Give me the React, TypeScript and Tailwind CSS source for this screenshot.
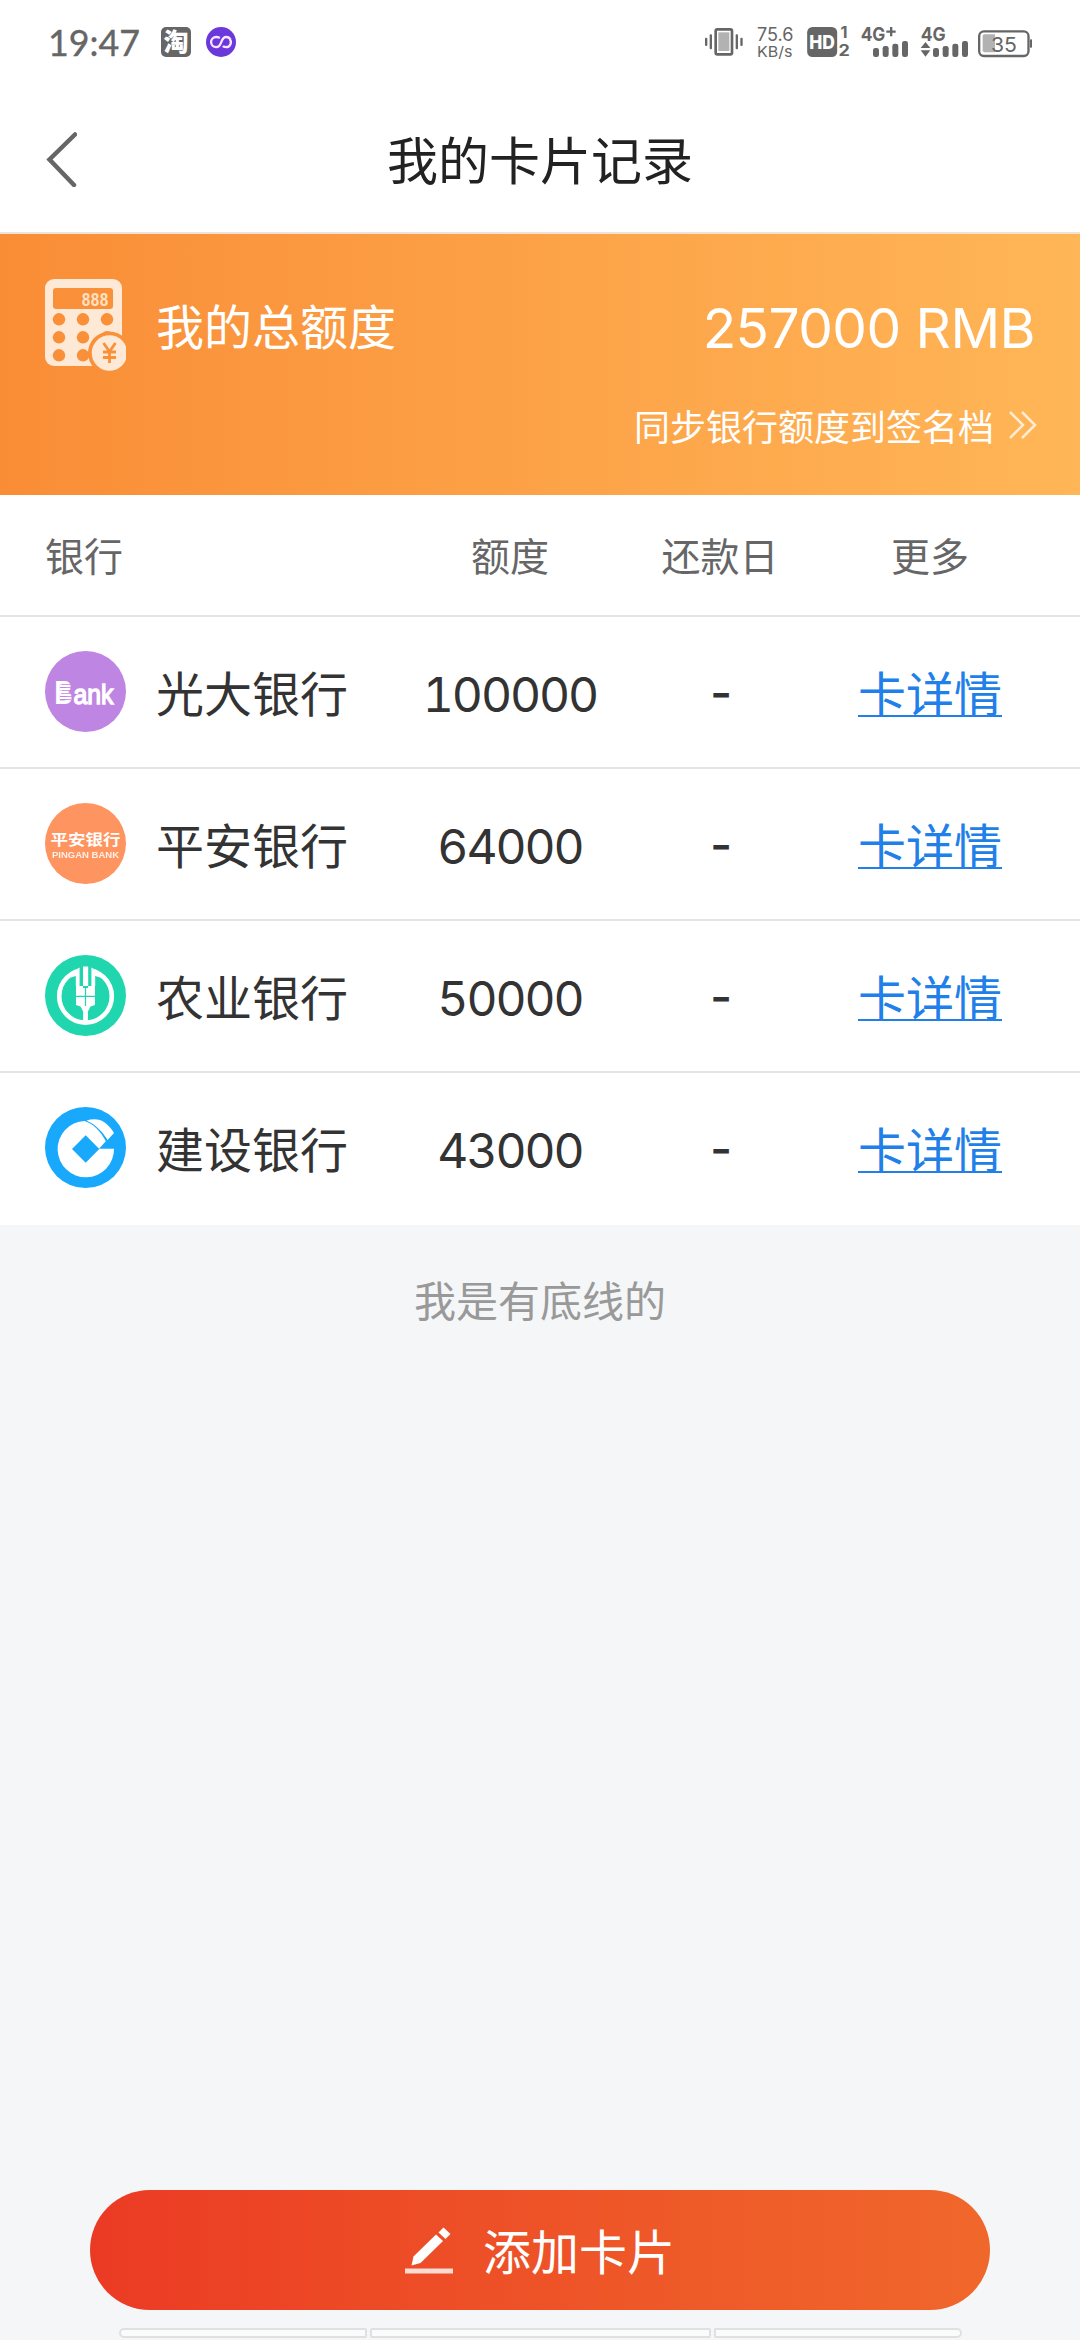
import type { ReactNode } from 'react'

const numFont = 'font-[Inter,"Noto_Sans_CJK_SC",sans-serif]'

interface Card {
  name: string
  amount: string
  logo: ReactNode
}

function EverbrightLogo() {
  return (
    <svg viewBox="0 0 81 81" className="size-[81px] shrink-0">
      <circle cx="40.5" cy="40.5" r="40.5" fill="#be86e2" />
      <g fill="#fff" fontFamily="Liberation Sans">
        <text x="9.5" y="52.5" fontSize="33" fontWeight="700" textLength="18" lengthAdjust="spacingAndGlyphs">B</text>
        <text x="28.5" y="52.5" fontSize="28" textLength="40" lengthAdjust="spacingAndGlyphs" stroke="#fff" strokeWidth="1.4">ank</text>
      </g>
      <path d="M17 33.5h9M18 36.5h9M17 39.5h10M16 42.5h11M17 45.5h10M16 48.5h10" stroke="#be86e2" strokeWidth="0.8" />
      <path d="M15 35h9M15 38h8M15 44h10M15 47h9" stroke="#fff" strokeWidth="1.8" />
    </svg>
  )
}

function PinganLogo() {
  return (
    <svg viewBox="0 0 81 81" className="size-[81px] shrink-0">
      <circle cx="40.5" cy="40.5" r="40.5" fill="#fe945f" />
      <text x="5.5" y="42" fontSize="14.5" fontWeight="700" fill="#fff" fontFamily="Noto Sans CJK SC" textLength="70" lengthAdjust="spacingAndGlyphs">平安银行</text>
      <text x="7" y="54.8" fontSize="9" fontWeight="700" fill="#fff" opacity="0.85" fontFamily="Liberation Sans" textLength="67" lengthAdjust="spacingAndGlyphs">PINGAN BANK</text>
    </svg>
  )
}

function AgriculturalLogo() {
  return (
    <svg viewBox="0 0 81 81" className="size-[81px] shrink-0">
      <circle cx="40.5" cy="40.5" r="40.5" fill="#20d6ae" />
      <circle cx="40.5" cy="41.3" r="26.3" fill="none" stroke="#fff" strokeWidth="4.6" />
      <path d="M31 10h19v14H31z" fill="#20d6ae" />
      <path d="M34.6 12.6V31h-3.8V21l-5 1.4-2-4zM46.4 12.6V31h3.8V21l5 1.4 2-4z" fill="#fff" />
      <path d="M38 11.5h5.2V31H38z" fill="#fff" />
      <path d="M31 31h7v2h5v-2h7v19l-4.5 1.5-2.6 5V69h-4.8V56.5l-2.6-5L31 50z" fill="#fff" />
      <path d="M31 41.3h19M40.5 32v19" stroke="#20d6ae" strokeWidth="1.2" />
    </svg>
  )
}

function ConstructionLogo() {
  return (
    <svg viewBox="0 0 81 81" className="size-[81px] shrink-0">
      <circle cx="40.5" cy="40.5" r="40.5" fill="#18a8fc" />
      <path d="M69 41.7A28.2 28.2 0 1 1 39.5 13.9C48 16.5 55.5 23.5 60.8 34.3L54 41.7z" fill="#fff" />
      <path d="M41.5 13.4C46 12 51 11.8 55 13C61 15.5 66 20.5 69 26L62.6 33C57.5 24.5 50.5 17.5 41.5 13.4z" fill="#fff" />
      <path d="M40.7 28.3 54.3 42 40.7 55.7 27 42z" fill="#18a8fc" />
    </svg>
  )
}

function CalculatorIcon() {
  return (
    <svg viewBox="0 0 81 92" className="h-[92px] w-[81px]">
      <mask id="calc">
        <rect width="77" height="87" rx="9" fill="#fff" />
        <rect x="8" y="9" width="60" height="21" rx="3" fill="#000" />
        {[40.3, 58.3, 76.3].map((y) =>
          [14, 38, 62].map((x) => <circle key={`${x}-${y}`} cx={x} cy={y} r="6.2" fill="#000" />),
        )}
        <circle cx="64.5" cy="74" r="21.5" fill="#000" />
        <circle cx="64.5" cy="74" r="17.8" fill="#fff" />
        <path d="M58.5 64 64.5 72.5 70.5 64M64.5 72.5V84M58 73h13M58 78.5h13" stroke="#000" strokeWidth="2.8" fill="none" />
      </mask>
      <rect width="81" height="92" fill="#fee8d6" mask="url(#calc)" />
      <text x="36.5" y="26.5" fontSize="20" fontWeight="700" fill="#fee0c4" fontFamily="Liberation Mono" textLength="27" lengthAdjust="spacingAndGlyphs">888</text>
    </svg>
  )
}

/** 状态栏 */
function StatusBar() {
  return (
    <div className="flex h-[84px] items-start px-12 pt-[27px] text-[#666]">
      <svg viewBox="0 0 94 30" className="h-[30px] w-[94px] overflow-visible">
        <text x="0" y="28.5" fontSize="37" fill="#666" fontFamily="Lato" stroke="#666" strokeWidth="0.4" textLength="92" lengthAdjust="spacingAndGlyphs">19:47</text>
      </svg>
      <svg viewBox="0 0 30 30" className="ml-[19px] size-[30px] overflow-visible">
        <rect width="30" height="30" rx="5" fill="#666" />
        <text x="2.5" y="24" fontSize="25" fontWeight="900" fill="#fff" fontFamily="Noto Sans CJK SC">淘</text>
      </svg>
      <svg viewBox="0 0 30 30" className="ml-[15px] size-[30px]">
        <circle cx="15" cy="15" r="15" fill="#6b38dc" />
        <path d="M13 10.6Q12 10 10.2 10a5 5 0 0 0 0 10.2C16.5 20.2 14 10 20.2 10a4.8 4.8 0 0 1 4 2M17.5 19.6Q18.5 20.2 20.2 20.2a5 5 0 0 0 3.5-8.2" fill="none" stroke="#fbe4ff" strokeWidth="2.3" strokeLinecap="round" />
      </svg>
      <div className="flex-1" />

      {/* 振动 */}
      <svg viewBox="75 81 114 90" className="h-[30px] w-[38px]" fill="#666">
        <rect x="107" y="88" width="49" height="75" rx="5" fill="none" stroke="#666" strokeWidth="8" />
        <rect x="115" y="97" width="33" height="56" fill="#b2b2b2" />
        <rect x="75" y="113" width="7" height="25" rx="3" />
        <rect x="89" y="103" width="7" height="45" rx="3" />
        <rect x="167" y="103" width="7" height="45" rx="3" />
        <rect x="181" y="113" width="7" height="25" rx="3" />
      </svg>
      <svg viewBox="0 0 38 30" className="ml-3.5 h-[30px] w-[38px] overflow-visible" fill="#666" fontFamily="Inter">
        <text x="0" y="14" fontSize="18" textLength="36.5" lengthAdjust="spacingAndGlyphs">75.6</text>
        <text x="0" y="29.5" fontSize="15" textLength="35.5" lengthAdjust="spacingAndGlyphs">KB/s</text>
      </svg>
      <svg viewBox="381 81 128 90" className="ml-3 h-[30px] w-[43px] overflow-visible" fill="#666" fontFamily="Inter" fontWeight="800">
        <rect x="381" y="81" width="90" height="90" rx="16" />
        <text x="387" y="148" fontSize="57" fill="#fff" textLength="77" lengthAdjust="spacingAndGlyphs">HD</text>
        <text x="481" y="115" fontSize="46" fontWeight="700" textLength="21" lengthAdjust="spacingAndGlyphs">1</text>
        <text x="475" y="168" fontSize="46" fontWeight="700" textLength="34" lengthAdjust="spacingAndGlyphs">2</text>
      </svg>
      <svg viewBox="543 81 144 90" className="ml-[11px] h-[30px] w-[48px] overflow-visible" fill="#666">
        <text x="542" y="124" fontSize="58" fontFamily="Inter" fontWeight="700" textLength="74" lengthAdjust="spacingAndGlyphs">4G</text>
        <path d="M619 95h28M633.5 81v28" stroke="#666" strokeWidth="7" />
        <rect x="579" y="144" width="18" height="27" rx="7" />
        <rect x="608" y="138" width="18" height="33" rx="7" />
        <rect x="637" y="131" width="18" height="40" rx="7" />
        <rect x="666" y="123" width="18" height="48" rx="7" />
      </svg>
      <svg viewBox="723 81 144 90" className="ml-3 h-[30px] w-[48px] overflow-visible" fill="#666">
        <text x="722" y="124" fontSize="58" fontFamily="Inter" fontWeight="700" textLength="75" lengthAdjust="spacingAndGlyphs">4G</text>
        <path d="M736.5 126 751 144h-29zM736.5 170 722 151h29z" />
        <rect x="759" y="144" width="18" height="27" rx="7" />
        <rect x="788" y="138" width="18" height="33" rx="7" />
        <rect x="817" y="131" width="18" height="40" rx="7" />
        <rect x="846" y="123" width="18" height="48" rx="7" />
      </svg>
      <svg viewBox="894 81 162 90" className="ml-[9px] h-[30px] w-[54px] overflow-visible" fill="#666">
        <rect x="897.5" y="94" width="148" height="74" rx="14" fill="none" stroke="#666" strokeWidth="7" />
        <path d="M914 103h31v54h-31a6 6 0 0 1-6-6v-42a6 6 0 0 1 6-6z" fill="#b2b2b2" />
        <rect x="1050" y="118" width="6" height="25" rx="2" />
        <text x="933" y="155" fontSize="62" fontFamily="Inter" textLength="78" lengthAdjust="spacingAndGlyphs">35</text>
      </svg>
    </div>
  )
}

const cards: Card[] = [
  { name: '光大银行', amount: '100000', logo: <EverbrightLogo /> },
  { name: '平安银行', amount: '64000', logo: <PinganLogo /> },
  { name: '农业银行', amount: '50000', logo: <AgriculturalLogo /> },
  { name: '建设银行', amount: '43000', logo: <ConstructionLogo /> },
]

function CardRow({ name, amount, logo }: Card) {
  return (
    <div className="grid h-[152px] grid-cols-[360px_210px_210px_210px] items-center border-b-2 border-[#e5e5e5] px-[45px] pb-px text-[48px] leading-[72px] text-[#333] last:border-white">
      <div className="flex items-center gap-[30px]">
        {logo}
        <span className="pb-0.5">{name}</span>
      </div>
      <span className={`${numFont} pt-[7px] text-center tracking-[-0.043em] tabular-nums`}>{amount}</span>
      <span className={`${numFont} pt-[3px] pl-0.5 text-center font-medium`}>-</span>
      <a className="pb-0.5 text-center text-[#207fe8] underline decoration-2 underline-offset-[3px] [text-decoration-skip-ink:none]">卡详情</a>
    </div>
  )
}

export default function App() {
  return (
    <div className='flex h-[2340px] w-[1080px] flex-col overflow-hidden bg-[#f4f6f8] font-["Noto_Sans_CJK_SC",sans-serif]'>
      <header className="h-[234px] border-b-2 border-[#f0e2d4] bg-white">
        <StatusBar />
        <div className="grid h-[150px] grid-cols-[1fr_auto_1fr] items-center px-[45px]">
          <svg viewBox="0 0 32 56" className="h-14 w-8" fill="none" stroke="#666" strokeWidth="4.5" strokeLinecap="round">
            <path d="M30 3.5 4.5 28.5 29 54" />
          </svg>
          <h1 className="pb-0.5 text-[51px] leading-[74px] text-[#222]">我的卡片记录</h1>
        </div>
      </header>

      <section className="h-[261px] bg-linear-to-r from-[#f98d36] to-[#ffb657] px-[45px] pt-[45px] text-white">
        <div className="flex h-[92px] items-center">
          <CalculatorIcon />
          <span className="ml-[30px] pb-[3px] text-[48px]">我的总额度</span>
          <span className={`${numFont} ml-auto pt-1.5 text-[55px] tracking-[-0.01em]`}>257000 RMB</span>
        </div>
        <div className="mt-7 -mr-0.5 flex items-center justify-end gap-[15px] text-[36px] leading-[52px]">
          <span>同步银行额度到签名档</span>
          <svg viewBox="0 0 28 28" className="size-7" fill="none" stroke="#fff" strokeOpacity="0.75" strokeWidth="2.5">
            <path d="M1 1 14 14 1 27M13 1 26 14 13 27" />
          </svg>
        </div>
      </section>

      <section className="bg-white">
        <div className="grid h-[122px] grid-cols-[360px_210px_210px_210px] items-center border-b-2 border-[#e5e5e5] px-[45px] pb-0.5 text-center text-[39px] text-[#666]">
          <span className="text-left">银行</span>
          <span>额度</span>
          <span>还款日</span>
          <span>更多</span>
        </div>
        <div>
          {cards.map((card) => (
            <CardRow key={card.name} {...card} />
          ))}
        </div>
      </section>

      <p className="mt-11 text-center text-[42px] leading-[60px] text-[#999]">我是有底线的</p>

      <div className="mt-auto px-[90px]">
        <button className="flex h-[120px] w-full items-center justify-center gap-[30px] rounded-full bg-linear-to-r from-[#eb3a24] to-[#f0672b] text-[48px] text-white">
          <svg viewBox="0 0 48 47" className="h-[47px] w-12" fill="#fff">
            <path d="M6.5 38.5 8.5 29.5 31 7.5 38 14 15.5 36z" />
            <path d="M33.5 5.5 38.5 0.5 45.5 7 40.5 12z" />
            <rect y="41.5" width="48" height="5" fillOpacity="0.8" />
          </svg>
          <span className="pb-[3px]">添加卡片</span>
        </button>
      </div>
      <div className="mt-[18px] mb-0.5 flex h-[10px] justify-center gap-[3px]">
        <div className="w-[248px] rounded-l-md rounded-r-xs border-2 border-[#dfe0e2] bg-[#fafbfb]" />
        <div className="w-[341px] rounded-xs border-2 border-[#dfe0e2] bg-[#fafbfb]" />
        <div className="w-[248px] rounded-l-xs rounded-r-md border-2 border-[#dfe0e2] bg-[#fafbfb]" />
      </div>
    </div>
  )
}
